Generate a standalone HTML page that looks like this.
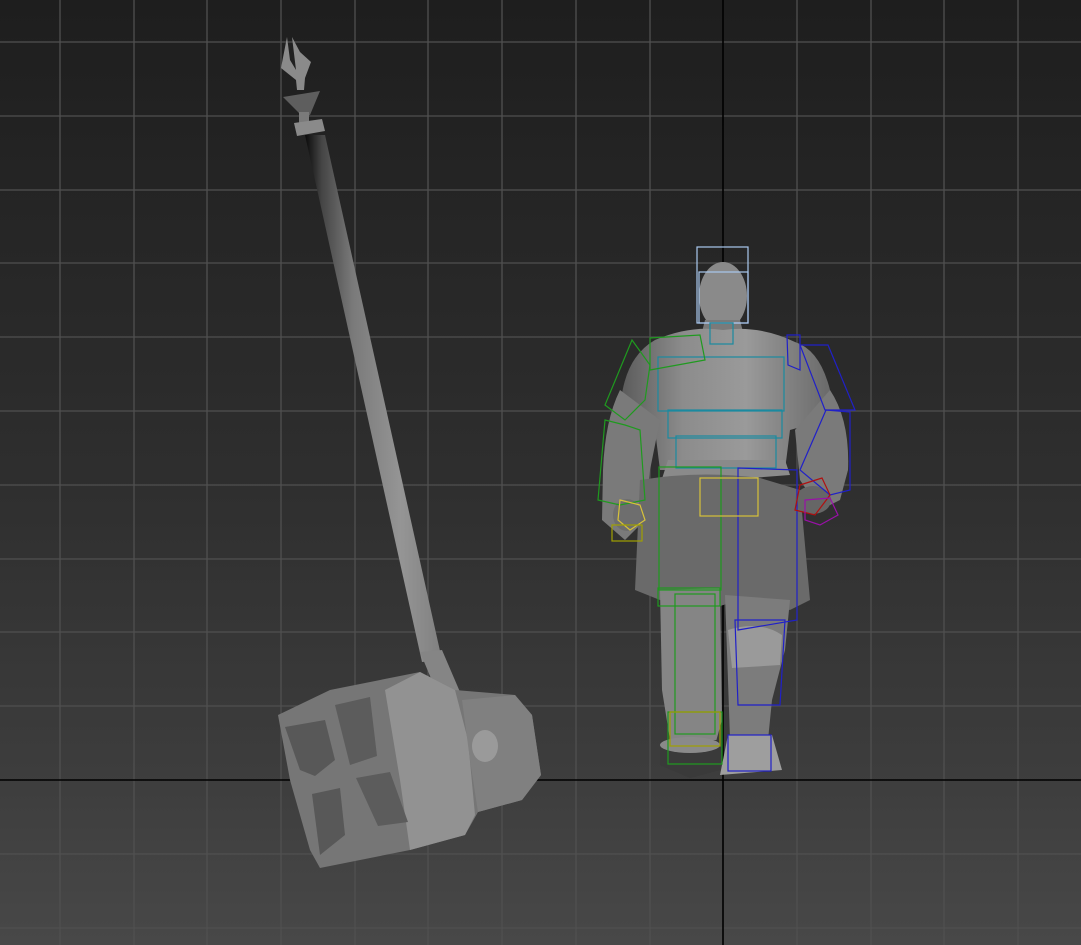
<!DOCTYPE html>
<html><head><meta charset="utf-8"><style>
html,body{margin:0;padding:0;background:#2a2a2a;}
svg{display:block}
</style></head><body>
<svg width="1081" height="945" viewBox="0 0 1081 945" xmlns="http://www.w3.org/2000/svg">
<defs>
<linearGradient id="bg" x1="0" y1="0" x2="0" y2="1">
<stop offset="0" stop-color="#1e1e1e"/><stop offset="0.5" stop-color="#2e2e2e"/><stop offset="0.8" stop-color="#3c3c3c"/><stop offset="1" stop-color="#484848"/>
</linearGradient>
<linearGradient id="shaft" x1="0" y1="0" x2="1" y2="0">
<stop offset="0" stop-color="#0a0a0a"/><stop offset="0.12" stop-color="#444"/><stop offset="0.35" stop-color="#7a7a7a"/><stop offset="0.7" stop-color="#959595"/><stop offset="1" stop-color="#808080"/>
</linearGradient>
<linearGradient id="skin" x1="0" y1="0" x2="1" y2="0">
<stop offset="0" stop-color="#5a5a5a"/><stop offset="0.3" stop-color="#8c8c8c"/><stop offset="0.6" stop-color="#9a9a9a"/><stop offset="1" stop-color="#6a6a6a"/>
</linearGradient>
</defs>
<rect width="1081" height="945" fill="url(#bg)"/>
<g stroke="#505050" stroke-width="1.3">
<line x1="0" y1="42" x2="1081" y2="42"/><line x1="0" y1="116" x2="1081" y2="116"/><line x1="0" y1="190" x2="1081" y2="190"/><line x1="0" y1="263" x2="1081" y2="263"/><line x1="0" y1="337" x2="1081" y2="337"/><line x1="0" y1="411" x2="1081" y2="411"/><line x1="0" y1="485" x2="1081" y2="485"/><line x1="0" y1="559" x2="1081" y2="559"/><line x1="0" y1="632" x2="1081" y2="632"/><line x1="0" y1="706" x2="1081" y2="706"/><line x1="0" y1="854" x2="1081" y2="854"/><line x1="0" y1="928" x2="1081" y2="928"/>
<line x1="60" y1="0" x2="60" y2="945"/><line x1="134" y1="0" x2="134" y2="945"/><line x1="207" y1="0" x2="207" y2="945"/><line x1="281" y1="0" x2="281" y2="945"/><line x1="355" y1="0" x2="355" y2="945"/><line x1="428" y1="0" x2="428" y2="945"/><line x1="502" y1="0" x2="502" y2="945"/><line x1="576" y1="0" x2="576" y2="945"/><line x1="650" y1="0" x2="650" y2="945"/><line x1="797" y1="0" x2="797" y2="945"/><line x1="871" y1="0" x2="871" y2="945"/><line x1="944" y1="0" x2="944" y2="945"/><line x1="1018" y1="0" x2="1018" y2="945"/>
</g>
<line x1="0" y1="780" x2="1081" y2="780" stroke="#000" stroke-width="1.6"/>
<line x1="723" y1="0" x2="723" y2="945" stroke="#000" stroke-width="1.6"/>

<!-- staff -->
<polygon points="305,135 325,135 442,660 422,662" fill="url(#shaft)"/>
<polygon points="420,652 442,650 460,692 440,700" fill="#858585"/>
<!-- tip -->
<polygon points="287,37 290,60 296,70 292,37 300,52 311,62 305,78 304,90 297,90 296,80 281,68" fill="#8a8a8a"/>
<polygon points="283,97 320,91 310,115 302,116" fill="#5e5e5e"/>
<rect x="299" y="112" width="10" height="16" fill="#7a7a7a"/>
<polygon points="294,123 322,119 325,131 297,136" fill="#8a8a8a"/>
<!-- hammer head -->
<polygon points="278,715 330,690 420,672 455,690 515,695 532,715 541,775 522,800 478,812 465,835 410,850 320,868 310,850 290,780" fill="#767676"/>
<polygon points="385,690 420,672 455,690 468,740 475,815 465,835 410,850 400,780" fill="#929292"/>
<polygon points="462,700 515,695 532,715 541,775 522,800 478,812 470,760" fill="#808080"/>
<ellipse cx="485" cy="746" rx="13" ry="16" fill="#9a9a9a"/>
<polygon points="285,727 325,720 335,760 315,776 300,770" fill="#585858"/>
<polygon points="335,705 370,697 377,756 350,765" fill="#5c5c5c"/>
<polygon points="312,794 340,788 345,835 320,855" fill="#585858"/>
<polygon points="356,778 390,772 408,822 378,826" fill="#5c5c5c"/>

<!-- character -->
<g>
<ellipse cx="723" cy="296" rx="24" ry="34" fill="#8a8a8a"/>
<path d="M705,320 L740,320 L745,340 L700,340 Z" fill="#7a7a7a"/>
<path d="M655,340 Q690,325 723,330 Q760,325 795,342 Q820,350 830,390 L825,420 L790,430 L785,470 L660,470 L655,430 L620,420 Q620,360 655,340 Z" fill="url(#skin)"/>
<path d="M620,390 Q605,420 603,470 L602,520 L625,540 L645,520 L650,470 L660,420 Z" fill="#7a7a7a"/>
<path d="M830,390 Q850,420 848,470 L840,500 L820,510 L800,480 L795,430 Z" fill="#7a7a7a"/>
<path d="M668,460 L785,460 L790,475 L660,485 Z" fill="#8a8a8a"/>
<path d="M640,480 Q700,470 760,478 L800,490 L810,600 L790,610 L740,600 L700,612 L660,600 L635,590 Z" fill="#6a6a6a"/>
<path d="M660,590 L720,588 L722,720 L715,745 L670,740 L662,690 Z" fill="#858585"/>
<path d="M725,595 L790,600 L785,650 L772,700 L768,740 L730,740 L728,680 Z" fill="#7c7c7c"/>
<path d="M728,630 Q760,620 782,635 L780,665 L732,668 Z" fill="#9a9a9a"/>
<path d="M660,740 L722,740 L720,770 L690,778 L660,765 Z" fill="#3a3a3a"/>
<path d="M728,735 L772,735 L782,770 L720,775 Z" fill="#9e9e9e"/>
<ellipse cx="690" cy="745" rx="30" ry="8" fill="#8a8a8a"/>
<ellipse cx="813" cy="500" rx="18" ry="14" fill="#666"/>
<ellipse cx="627" cy="515" rx="14" ry="16" fill="#6e6e6e"/>
</g>
<!-- rig boxes -->
<g fill="none" stroke-width="1.2">
<rect x="697" y="247" width="51" height="76" stroke="#a9c8ee"/>
<rect x="699" y="272" width="49" height="51" stroke="#a9c8ee"/>
<g stroke="#1a8aa0">
<rect x="710" y="323" width="23" height="21"/>
<rect x="658" y="357" width="126" height="54"/>
<rect x="668" y="410" width="114" height="28"/>
<rect x="676" y="436" width="100" height="32"/>
</g>
<g stroke="#1f9a1f">
<polygon points="632,340 650,365 645,400 625,420 605,405"/>
<polygon points="650,338 700,335 705,360 650,370"/>
<polygon points="605,420 625,425 640,430 645,500 620,505 598,500"/>
<rect x="659" y="467" width="62" height="123"/>
<rect x="658" y="588" width="62" height="18"/>
<rect x="675" y="594" width="40" height="140"/>
<rect x="668" y="712" width="54" height="52"/>
</g>
<g stroke="#2020c8">
<polygon points="787,335 788,365 800,370 800,335"/>
<polygon points="800,345 828,345 855,410 825,410"/>
<polygon points="826,410 850,412 850,490 830,495 800,470"/>
<polygon points="738,468 797,470 797,620 738,630"/>
<polygon points="735,620 785,620 780,705 738,705"/>
<rect x="728" y="735" width="43" height="36"/>
</g>
<g stroke="#d7c23a"><rect x="700" y="478" width="58" height="38"/><polygon points="620,500 640,505 645,520 630,530 618,520"/></g>
<g stroke="#a0a000"><rect x="670" y="712" width="50" height="34"/><rect x="612" y="525" width="30" height="16"/></g>
<g stroke="#b01010"><polygon points="800,485 822,478 830,495 815,515 795,510"/></g>
<g stroke="#9a10a8"><polygon points="805,500 830,498 838,515 820,525 805,520"/></g>
</g>
</svg>
</body></html>
